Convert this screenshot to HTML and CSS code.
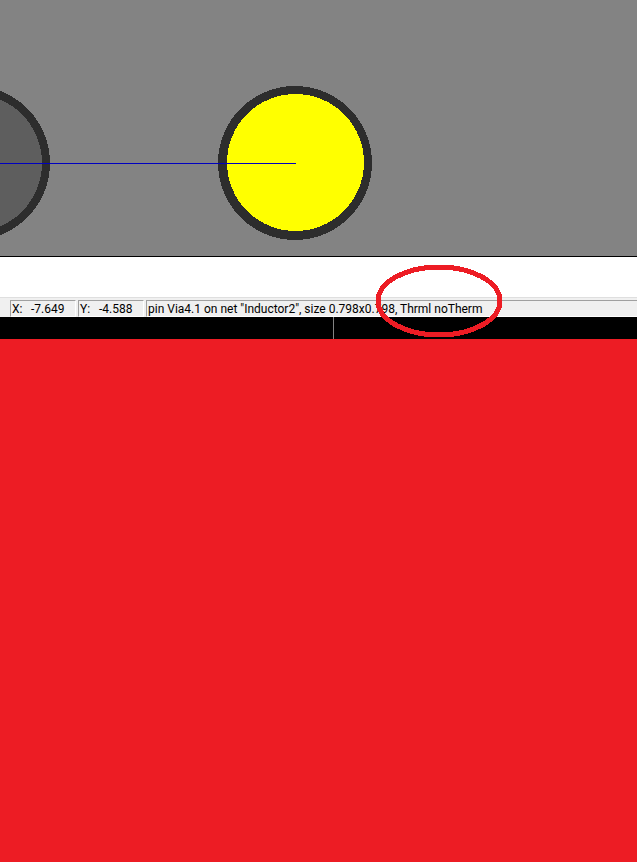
FILE: index.html
```html
<!DOCTYPE html>
<html lang="en">
<head>
<meta charset="utf-8">
<title>Board editor</title>
<link rel="stylesheet" href="styles.css">
</head>
<body>
<main class="editor">
  <svg class="canvas" role="img" aria-label="Board view with two vias" shape-rendering="crispEdges">
    <circle class="rim" cx="-27" cy="163" r="77"/>
    <circle class="pad" cx="-27" cy="163" r="69"/>
    <circle class="rim" cx="295" cy="163" r="77"/>
    <circle class="pad selected" cx="295.500" cy="162.500" r="68.500"/>
    <path class="trace" d="M0 163.500H296"/>
  </svg>
  <div class="log"></div>
  <footer class="status">
    <div class="cell coord"><span class="axis">X:</span><span>-7.649</span></div>
    <div class="cell coord"><span class="axis">Y:</span><span>-4.588</span></div>
    <div class="cell message">
      <span>pin Via4.1 on net "Inductor2", size 0.798x0.798, Thrml noTherm</span>
      <svg class="callout" viewBox="0 0 128 74" aria-hidden="true" shape-rendering="crispEdges">
        <ellipse cx="64" cy="37" rx="61" ry="34"/>
      </svg>
    </div>
  </footer>
  <div class="taskbar"><div class="divider"></div></div>
  <div class="backdrop"></div>
</main>
</body>
</html>
```
FILE: styles.css
```css
body {
  margin: 0;
  font: 12px/17px Roboto, "Open Sans", sans-serif;
  color: #000;
}

.editor {
  display: flex;
  flex-direction: column;
  min-height: 100vh;
}

.canvas {
  display: block;
  width: 100%;
  height: 256px;
  background: #838383;
  border-bottom: 1px solid #000;
}

.rim {
  fill: #2d2d2d;
}

.pad {
  fill: #5e5e5e;
}

.selected {
  fill: #ff0;
}

.trace {
  stroke: #0000c0;
  stroke-width: 1px;
}

.log {
  height: 40px;
  background: #fff;
}

.status {
  display: flex;
  gap: 2px;
  padding: 2px 0 0 10px;
  background: #f0f0f0;
  border-top: 1px solid #dfdfdf;
}

.cell {
  box-sizing: border-box;
  height: 17px;
  border: 1px solid #fff;
  border-top-color: #a0a0a0;
  border-left-color: #a0a0a0;
  padding-left: 1px;
  white-space: nowrap;
}

.coord {
  display: flex;
  width: 66px;
}

.axis {
  width: 19px;
}

.message {
  position: relative;
  flex: 1;
  border-right: 0;
}

.callout {
  position: absolute;
  top: -37px;
  left: 228px;
  width: 128px;
  height: 74px;
}

.callout ellipse {
  fill: none;
  stroke: #ed1c24;
  stroke-width: 5px;
}

.taskbar {
  height: 22px;
  background: #000;
}

.divider {
  width: 333px;
  height: 100%;
  border-right: 1px solid #838383;
}

.backdrop {
  flex: 1;
  background: #ed1c24;
}
```
